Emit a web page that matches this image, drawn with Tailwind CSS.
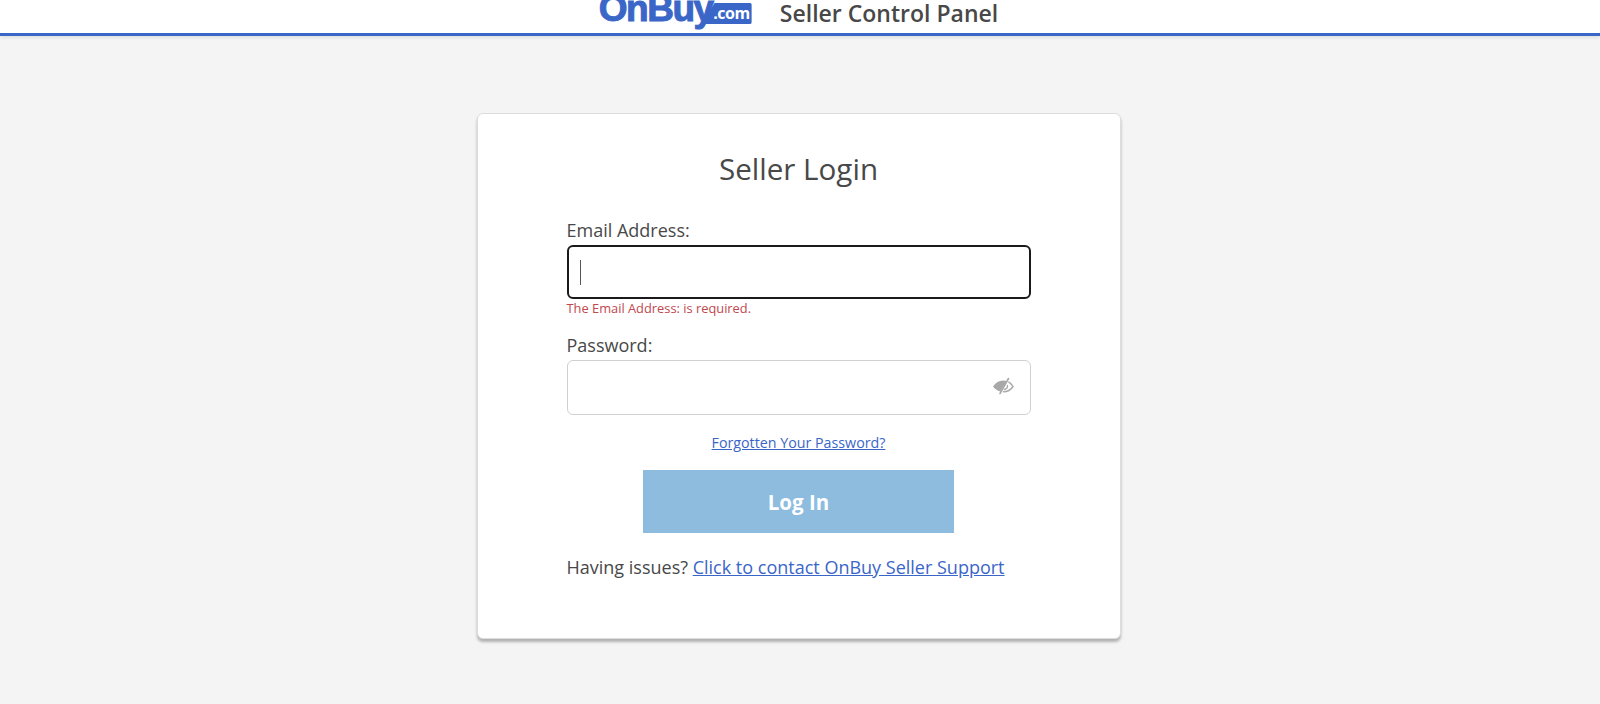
<!DOCTYPE html>
<html lang="en">
<head>
    <meta charset="UTF-8">
    <title>Seller Login</title>
    <script src="https://cdn.jsdelivr.net/npm/@tailwindcss/browser@4"></script>
</head>
<body class="h-[704px] overflow-hidden bg-[#f4f4f4] font-['Open_Sans',sans-serif] text-[#484848]">

    <!-- Header -->
    <header class="h-[36px] bg-white border-b-[3px] border-[#3a66c8] shadow-[0_2px_3px_rgba(0,0,0,0.08)] flex justify-center pr-[3px] overflow-hidden">
        <div class="flex items-start h-[33px] overflow-hidden">
            <div class="flex items-start mt-[-13px] w-[181px] shrink-0">
                <span class="relative z-10 font-['Liberation_Sans',sans-serif] font-bold text-[37px] leading-[44px] tracking-[-1.5px] text-[#3a66c8] [-webkit-text-stroke:1px_#3a66c8]">OnBuy</span>
                <span class="mt-[16px] ml-[-11px] h-[21px] w-[50px] rounded-[2px] bg-[#3a66c8] text-white text-[16px] leading-[20px] font-bold text-right pr-[2px] tracking-[-0.5px] [clip-path:polygon(26%_0,100%_0,100%_100%,0_100%)]">.com</span>
            </div>
            <span class="text-[23px] leading-[26px] font-semibold">Seller Control Panel</span>
        </div>
    </header>

    <!-- Login card -->
    <main class="flex justify-center pt-[77px] pr-[3px]">
        <div class="w-[644px] h-[526px] bg-white border border-[#dddddd] rounded-[6px] shadow-[0_3px_3px_rgba(0,0,0,0.28)] px-[89px] pt-[35px]">
            <h1 class="text-center text-[29.6px] leading-[40px] mb-[29px]">Seller Login</h1>

            <form>
                <label class="block text-[18px] leading-[25px] mb-[2px]">Email Address:</label>
                <div class="h-[54px] w-[464px] bg-white border-2 border-[#1a1a1a] rounded-[6px] pl-[11px] flex items-center">
                    <span class="block w-px h-[25px] bg-[#555555]"></span>
                </div>
                <p class="text-[12.85px] leading-[16px] text-[#c0484e] mt-[1px] mb-[17px]">The Email Address: is required.</p>

                <label class="block text-[18px] leading-[25px] mb-[2px]">Password:</label>
                <div class="h-[55px] w-[464px] bg-white border border-[#d0d0d0] rounded-[6px] pr-[16px] flex items-center justify-end">
                    <svg xmlns="http://www.w3.org/2000/svg" class="w-[22px] h-[18px] mb-[3px]" viewBox="0 0 22 18" fill="none">
                        <path d="M1 9.500C3.500 5.500 7 3.500 11 3.500c1.300 0 2.500.2 3.600.6L8.300 14.600C5.300 13.600 2.800 12 1 9.500z" fill="#a8a8a8"/>
                        <path d="M16.500 1.500 8 16.500" stroke="#a8a8a8" stroke-width="1.600" stroke-linecap="round"/>
                        <path d="M16.800 5.200c1.800 1 3.200 2.500 4.200 4.300-2.200 3.400-5.500 5.300-9.500 5.300" stroke="#a8a8a8" stroke-width="1.500" stroke-linecap="round"/>
                        <path d="M15.500 8.500c.3 2.300-1.300 3.800-3.200 4" stroke="#a8a8a8" stroke-width="1.300" stroke-linecap="round"/>
                    </svg>
                </div>

                <div class="text-center mt-[15px]">
                    <a href="#" class="text-[14.25px] leading-[20px] underline text-[#3a66c8]">Forgotten Your Password?</a>
                </div>

                <button type="button" class="block mx-auto mt-[16px] w-[311px] h-[63px] pt-[2px] bg-[#8dbcdf] text-white text-[20.5px] font-bold">Log In</button>

                <p class="mt-[22px] text-[18px] leading-[25px]">Having issues? <a href="#" class="underline text-[#3a66c8]">Click to contact OnBuy Seller Support</a></p>
            </form>
        </div>
    </main>

</body>
</html>
